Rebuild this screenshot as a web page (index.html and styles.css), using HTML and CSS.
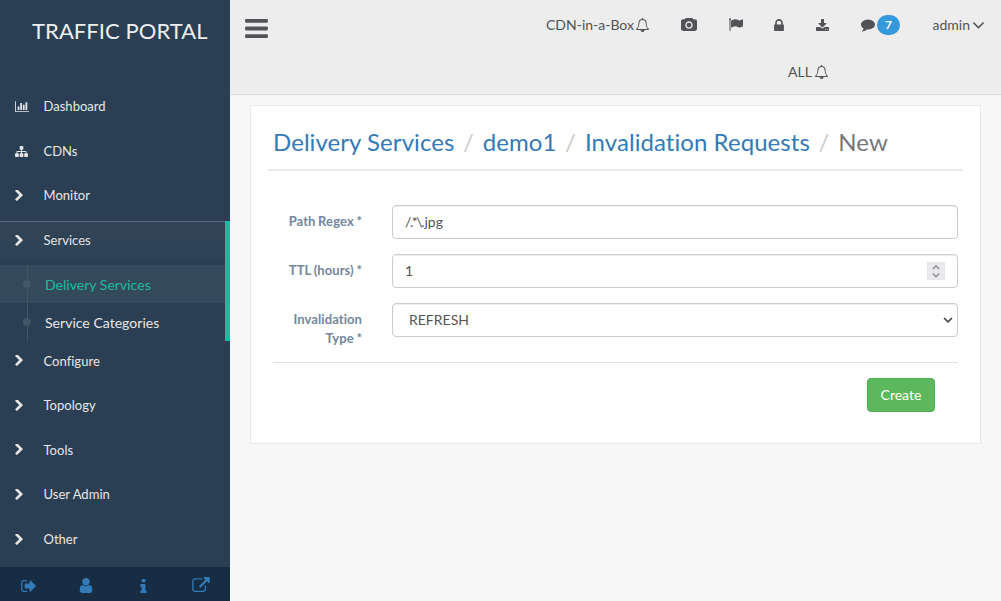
FILE: index.html
```html
<!DOCTYPE html>
<html lang="en">
<head>
<meta charset="utf-8">
<title>Traffic Portal</title>
<link rel="stylesheet" href="styles.css">
</head>
<body>
<svg class="defs" aria-hidden="true">
  <symbol id="chevron" viewBox="346 142 1036 1496"><path d="M1363 877l-742 742q-19 19-45 19t-45-19l-166-166q-19-19-19-45t19-45l531-531-531-531q-19-19-19-45t19-45l166-166q19-19 45-19t45 19l742 742q19 19 19 45t-19 45z"/></symbol>
  <symbol id="bell" viewBox="64 0 1664 1792"><path d="M912 1696q0-16-16-16-59 0-101.500-42.500t-42.500-101.500q0-16-16-16t-16 16q0 73 51.500 124.500t124.500 51.500q16 0 16-16zm-666-288h1300q-266-300-266-832 0-51-24-105t-69-103-121.500-80.500-169.500-31.500-169.500 31.500-121.500 80.500-69 103-24 105q0 532-266 832zm1482 0q0 52-38 90t-90 38h-448q0 106-75 181t-181 75-181-75-75-181h-448q-52 0-90-38t-38-90q50-42 91-88t85-119.500 74.500-158.500 50-206 19.500-260q0-152 117-282.500t307-158.500q-8-19-8-39 0-40 28-68t68-28 68 28 28 68q0 20-8 39 190 28 307 158.500t117 282.500q0 139 19.500 260t50 206 74.500 158.500 85 119.500 91 88z"/></symbol>
</svg>
<div class="app">
  <aside class="sidebar">
    <div class="brand">TRAFFIC PORTAL</div>
    <ul class="menu">
      <li><a class="item"><svg class="ico chart" viewBox="0 128 2048 1536"><path d="M640 896v512h-256v-512h256zm384-512v1024h-256v-1024h256zm1024 1152v128h-2048v-1536h128v1408h1920zm-640-896v768h-256v-768h256zm384-384v1152h-256v-1152h256z"/></svg><span>Dashboard</span></a></li>
      <li><a class="item"><svg class="ico sitemap" viewBox="0 128 1792 1536"><path d="M1792 1248v320q0 40-28 68t-68 28h-320q-40 0-68-28t-28-68v-320q0-40 28-68t68-28h96v-192h-512v192h96q40 0 68 28t28 68v320q0 40-28 68t-68 28h-320q-40 0-68-28t-28-68v-320q0-40 28-68t68-28h96v-192h-512v192h96q40 0 68 28t28 68v320q0 40-28 68t-68 28h-320q-40 0-68-28t-28-68v-320q0-40 28-68t68-28h96v-192q0-52 38-90t90-38h512v-192h-96q-40 0-68-28t-28-68v-320q0-40 28-68t68-28h320q40 0 68 28t28 68v320q0 40-28 68t-68 28h-96v192h512q52 0 90 38t38 90v192h96q40 0 68 28t28 68z"/></svg><span>CDNs</span></a></li>
      <li><a class="item"><svg class="ico chev"><use href="#chevron"/></svg><span>Monitor</span></a></li>
      <li class="active"><a class="item"><svg class="ico chev"><use href="#chevron"/></svg><span>Services</span></a>
        <ul class="submenu">
          <li class="current"><a>Delivery Services</a></li>
          <li><a>Service Categories</a></li>
        </ul>
      </li>
      <li><a class="item"><svg class="ico chev"><use href="#chevron"/></svg><span>Configure</span></a></li>
      <li><a class="item"><svg class="ico chev"><use href="#chevron"/></svg><span>Topology</span></a></li>
      <li><a class="item"><svg class="ico chev"><use href="#chevron"/></svg><span>Tools</span></a></li>
      <li><a class="item"><svg class="ico chev"><use href="#chevron"/></svg><span>User Admin</span></a></li>
      <li><a class="item"><svg class="ico chev"><use href="#chevron"/></svg><span>Other</span></a></li>
    </ul>
    <div class="side-footer">
      <a><svg class="f-out" viewBox="64 256 1568 1280"><path d="M704 1440q0 4 1 20t.5 26.500-3 23.500-10 19.500-20.500 6.500h-320q-119 0-203.500-84.500t-84.500-203.500v-704q0-119 84.500-203.500t203.500-84.500h320q13 0 22.500 9.500t9.500 22.500q0 4 1 20t.5 26.500-3 23.500-10 19.500-20.500 6.500h-320q-66 0-113 47t-47 113v704q0 66 47 113t113 47h312l11.500 1 11.500 3 8 5.500 7 9 2 13.500zm928-544q0 26-19 45l-544 544q-19 19-45 19t-45-19-19-45v-288h-448q-26 0-45-19t-19-45v-384q0-26 19-45t45-19h448v-288q0-26 19-45t45-19 45 19l544 544q19 19 19 45z"/></svg></a>
      <a><svg class="f-user" viewBox="256 128 1280 1536"><path d="M1536 1399q0 109-62.500 187t-150.500 78h-854q-88 0-150.500-78t-62.500-187q0-85 8.500-160.500t31.500-152 58.500-131 94-89 134.500-34.500q131 128 313 128t313-128q76 0 134.500 34.500t94 89 58.500 131 31.500 152 8.500 160.500zm-256-887q0 159-112.500 271.500t-271.500 112.500-271.500-112.500-112.500-271.500 112.500-271.500 271.500-112.500 271.500 112.500 112.500 271.500z"/></svg></a>
      <a><svg class="f-info" viewBox="576 128 640 1408"><path d="M1216 1344v128q0 26-19 45t-45 19h-512q-26 0-45-19t-19-45v-128q0-26 19-45t45-19h64v-384h-64q-26 0-45-19t-19-45v-128q0-26 19-45t45-19h384q26 0 45 19t19 45v576h64q26 0 45 19t19 45zm-128-1152v192q0 26-19 45t-45 19h-256q-26 0-45-19t-19-45v-192q0-26 19-45t45-19h256q26 0 45 19t19 45z"/></svg></a>
      <a><svg class="f-ext" viewBox="0 0 1792 1536"><path d="M1408 928v320q0 119-84.500 203.500t-203.500 84.500h-832q-119 0-203.500-84.500t-84.500-203.500v-832q0-119 84.500-203.500t203.500-84.500h704q14 0 23 9t9 23v64q0 14-9 23t-23 9h-704q-66 0-113 47t-47 113v832q0 66 47 113t113 47h832q66 0 113-47t47-113v-320q0-14 9-23t23-9h64q14 0 23 9t9 23zm384-864v512q0 26-19 45t-45 19-45-19l-176-176-652 652q-10 10-23 10t-23-10l-114-114q-10-10-10-23t10-23l652-652-176-176q-19-19-19-45t19-45 45-19h512q26 0 45 19t19 45z"/></svg></a>
    </div>
  </aside>
  <div class="page">
    <header class="topbar">
      <svg class="burger" viewBox="0 0 1536 1280"><path d="M1536 1088v128q0 26-19 45t-45 19h-1408q-26 0-45-19t-19-45v-128q0-26 19-45t45-19h1408q26 0 45 19t19 45zm0-512v128q0 26-19 45t-45 19h-1408q-26 0-45-19t-19-45v-128q0-26 19-45t45-19h1408q26 0 45 19t19 45zm0-512v128q0 26-19 45t-45 19h-1408q-26 0-45-19t-19-45v-128q0-26 19-45t45-19h1408q26 0 45 19t19 45z"/></svg>
      <nav class="tools">
        <div class="tools-row">
          <a class="t-cdn">CDN-in-a-Box<svg class="bell"><use href="#bell"/></svg></a>
          <a class="t-camera"><svg viewBox="-64 128 1920 1536"><path d="M896 672q119 0 203.500 84.500t84.500 203.500-84.500 203.500-203.500 84.500-203.500-84.500-84.500-203.500 84.500-203.500 203.500-84.500zm704-416q106 0 181 75t75 181v896q0 106-75 181t-181 75h-1408q-106 0-181-75t-75-181v-896q0-106 75-181t181-75h224l51-136q19-49 69.500-84.500t103.500-35.500h512q53 0 103.500 35.500t69.500 84.500l51 136h224zm-704 1152q185 0 316.500-131.500t131.500-316.500-131.500-316.500-316.500-131.500-316.500 131.500-131.500 316.500 131.500 316.500 316.500 131.500z"/></svg></a>
          <a class="t-flag"><svg viewBox="64 128 1728 1536"><path d="M320 256q0 72-64 110v1266q0 13-9.500 22.500t-22.500 9.500h-64q-13 0-22.500-9.500t-9.500-22.500v-1266q-64-38-64-110 0-53 37.500-90.500t90.500-37.500 90.500 37.500 37.500 90.500zm1472 64v763q0 25-12.500 38.500t-39.500 27.500q-215 116-369 116-61 0-123.500-22t-108.500-48-115.500-48-142.500-22q-192 0-464 146-17 9-33 9-26 0-45-19t-19-45v-742q0-32 31-55 21-14 79-43 236-120 421-120 107 0 200 29t219 88q38 19 88 19 54 0 117.500-21t110-47 88-47 54.500-21q26 0 45 19t19 45z"/></svg></a>
          <a class="t-lock"><svg viewBox="320 128 1152 1408"><path d="M640 768h512v-192q0-106-75-181t-181-75-181 75-75 181v192zm832 96v576q0 40-28 68t-68 28h-960q-40 0-68-28t-28-68v-576q0-40 28-68t68-28h32v-192q0-184 132-316t316-132 316 132 132 316v192h32q40 0 68 28t28 68z"/></svg></a>
          <a class="t-down"><svg viewBox="64 0 1664 1536"><path d="M1344 1344q0-26-19-45t-45-19-45 19-19 45 19 45 45 19 45-19 19-45zm256 0q0-26-19-45t-45-19-45 19-19 45 19 45 45 19 45-19 19-45zm128-224v320q0 40-28 68t-68 28h-1472q-40 0-68-28t-28-68v-320q0-40 28-68t68-28h465l135 136q58 56 136 56t136-56l136-136h464q40 0 68 28t28 68zm-325-569q17 41-14 70l-448 448q-18 19-45 19t-45-19l-448-448q-31-29-14-70 17-39 59-39h256v-448q0-26 19-45t45-19h256q26 0 45 19t19 45v448h256q42 0 59 39z"/></svg></a>
          <a class="t-comment"><svg viewBox="0 256 1792 1536"><path d="M1792 896q0 174-120 321.500t-326 233-450 85.500q-70 0-145-8-198 175-460 242-49 14-114 22-17 2-30.500-9t-17.500-29v-1q-3-4-.5-12t2-10 4.500-9.500l6-9 7-8.500 8-9q7-8 31-34.500t34.500-38 31-39.500 32.500-51 27-59 26-76q-157-89-247.500-220t-90.500-281q0-130 71-248.500t191-204.500 286-136.500 348-50.500q244 0 450 85.500t326 233 120 321.500z"/></svg><span class="count">7</span></a>
          <a class="t-admin">admin<svg viewBox="407 676 988 559"><path d="M1395 736q0 13-10 23l-466 466q-10 10-23 10t-23-10l-466-466q-10-10-10-23t10-23l50-50q10-10 23-10t23 10l393 393 393-393q10-10 23-10t23 10l50 50q10 10 10 23z"/></svg></a>
        </div>
        <div class="tools-row second"><a>ALL<svg class="bell"><use href="#bell"/></svg></a></div>
      </nav>
    </header>
    <main class="panel">
      <ol class="crumbs">
        <li><a>Delivery Services</a></li><li><a>demo1</a></li><li><a>Invalidation Requests</a></li><li>New</li>
      </ol>
      <form class="form">
        <div class="field"><label>Path Regex *</label><div class="control"><span><span class="kern">/.*\</span>.jpg</span></div></div>
        <div class="field"><label>TTL (hours) *</label><div class="control">1<span class="spin"><svg viewBox="0 0 18 18"><path d="M5.800 7 9 3.900 12.200 7M5.800 11.500 9 14.600 12.200 11.500"/></svg></span></div></div>
        <div class="field"><label>Invalidation Type *</label><div class="control select">REFRESH<svg class="caret" viewBox="0 0 10 6"><path d="M1 1 5 4.800 9 1"/></svg></div></div>
        <div class="actions"><button type="button">Create</button></div>
      </form>
    </main>
  </div>
</div>
</body>
</html>
```
FILE: styles.css
```css
* { box-sizing: border-box; }
body {
  margin: 0;
  font-family: Lato, "Liberation Sans", sans-serif;
  font-size: 13px;
  line-height: 1.42857;
  color: #73879c;
  background: #f7f7f7;
}
ul, ol { list-style: none; margin: 0; padding: 0; }
svg { display: block; fill: currentColor; flex: none; }
.defs { display: none; }
.app { display: flex; height: 601px; overflow: hidden; }

.sidebar {
  width: 230px;
  flex: none;
  display: flex;
  flex-direction: column;
  background: #2a3f54;
  color: #e7e7e7;
}
.brand {
  height: 87.2px;
  padding: 1px 0 0 32px;
  font-size: 22px;
  line-height: 59px;
  letter-spacing: .06px;
  color: #ecf0f1;
  white-space: nowrap;
}
.menu { flex: 1; }
.item {
  display: flex;
  align-items: center;
  height: 38.57px;
  margin-bottom: 6px;
  padding-left: 15px;
}
.item span { width: 186.500px; letter-spacing: .02px; }
.ico { margin-right: auto; }
.chart { width: 14px; height: 11px; }
.sitemap { width: 13px; height: 11px; }
.chev { width: 8px; height: 11px; }
.active { border-right: 5px solid #1abb9c; }
.active > .item {
  background: linear-gradient(#334556, #2c4257), #2a3f54;
  box-shadow: inset 0 1px 0 #566779;
  text-shadow: rgba(0,0,0,.25) 0 -1px 0;
  margin-bottom: 0;
}
.active > .item span { width: 181.500px; }
.active + li { padding-top: .4px; }
.submenu { padding-top: 5.700px; }
.submenu li {
  position: relative;
  height: 38px;
  padding-left: 45px;
  font-size: 14px;
  line-height: 39px;
  letter-spacing: .03px;
}
.submenu .current { background: #35495d; color: #1abb9c; }
.submenu li::before {
  content: "";
  position: absolute;
  left: 23px;
  top: 15px;
  width: 8px;
  height: 8px;
  border-radius: 50%;
  background: #425668;
}
.submenu li::after {
  content: "";
  position: absolute;
  left: 27px;
  top: 0;
  bottom: 0;
  border-left: 1px solid #425668;
}
.side-footer {
  display: grid;
  grid-template-columns: repeat(4, 1fr);
  height: 34px;
  background: #172d44;
  color: #337ab7;
}
.side-footer a { display: flex; justify-content: center; align-items: center; padding-top: 3px; }
.f-out { width: 15px; height: 12px; margin-right: 1px; }
.f-user { width: 14px; height: 15px; }
.f-info { width: 7px; height: 14px; }
.f-ext { width: 18px; height: 15px; margin-bottom: 2px; }

.page { flex: 1; min-width: 0; }
.topbar {
  display: flex;
  justify-content: space-between;
  height: 95px;
  padding: 0 16px 0 15px;
  background: #ededed;
  border-bottom: 1px solid #d9dee4;
  color: #515356;
}
.burger { width: 23px; height: 19px; margin-top: 19px; }
.tools { width: 439px; font-size: 14px; }
.tools-row { display: flex; align-items: center; height: 47px; padding-top: 3px; white-space: nowrap; }
.tools-row a { display: flex; align-items: center; }
.bell { width: 13px; height: 14px; margin-left: 3px; }
.t-cdn .bell { margin-left: 2px; }
.t-camera { margin-left: 32px; }
.t-camera svg { width: 16px; height: 13px; margin-bottom: 1px; }
.t-flag { margin-left: 32px; }
.t-flag svg { width: 14px; height: 13px; margin-bottom: 1px; }
.t-lock { margin-left: 31px; }
.t-lock svg { width: 10px; height: 12px; margin-bottom: 1px; }
.t-down { margin-left: 32px; }
.t-down svg { width: 13px; height: 12px; margin-bottom: 1px; }
.t-comment { margin-left: 32px; }
.t-comment svg { width: 14px; height: 13px; }
.count {
  width: 23px;
  height: 20px;
  margin-left: 2px;
  border-radius: 10px;
  background: #3498db;
  color: #fff;
  font-size: 12px;
  font-weight: 700;
  line-height: 20px;
  text-align: center;
}
.t-admin { margin-left: auto; padding-right: 1px; }
.t-admin svg { width: 11px; height: 7px; margin: 1px 0 0 3px; }
.second { padding-left: 242px; }

.panel {
  width: 731px;
  height: 339px;
  margin: 10px 0 0 20px;
  padding: 11px 17px;
  background: #fff;
  border: 1px solid #e6e9ed;
}
.crumbs {
  display: flex;
  height: 54px;
  padding-left: 5px;
  border-bottom: 2px solid #e6e9ed;
  font-size: 24px;
  line-height: 50px;
  letter-spacing: .06px;
  color: #777;
  white-space: nowrap;
}
.crumbs a { color: #337ab7; }
.crumbs li + li::before { content: "/"; color: #ccc; padding: 0 9px 0 8.500px; }
.form { padding: 34px 5px 0; }
.field { display: flex; height: 49px; }
.field label {
  width: 89px;
  margin-right: 30px;
  padding-top: 7px;
  font-weight: 700;
  line-height: 19px;
  text-align: right;
  letter-spacing: .08px;
  word-spacing: -.6px;
}
.control {
  display: flex;
  justify-content: space-between;
  align-items: center;
  width: 566px;
  height: 34px;
  padding: 0 12px;
  border: 1px solid #ccc;
  border-radius: 4px;
  box-shadow: inset 0 1px 1px rgba(0,0,0,.075);
  color: #555;
  font-size: 14px;
}
.kern { letter-spacing: -1.450px; }
.spin { width: 18px; height: 18px; background: #e9e9ed; }
.spin path, .caret path { fill: none; stroke: #8f8f9d; stroke-width: 1.500; }
.select { padding: 0 4px 0 16px; }
.caret { width: 10px; height: 6px; }
.caret path { stroke: #444; stroke-width: 1.700; }
.actions {
  display: flex;
  justify-content: flex-end;
  margin-top: 10px;
  padding: 15px 23px 0 0;
  border-top: 1px solid #e0e2e5;
}
button {
  width: 68px;
  height: 34px;
  border: 1px solid #4cae4c;
  border-radius: 4px;
  background: #5cb85c;
  color: #fff;
  font: 14px Lato, sans-serif;
  padding: 0 0 1px;
}
```
